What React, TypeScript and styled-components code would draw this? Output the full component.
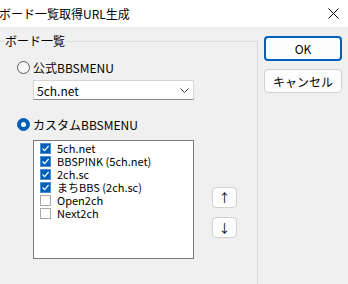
import styled, { createGlobalStyle } from "styled-components";

const Global = createGlobalStyle`
    html, body {
        margin: 0;
        padding: 0;
        background: #f0f0f0;
    }
    * {
        box-sizing: border-box;
    }
`;

const Window = styled.div`
    width: 348px;
    height: 284px;
    overflow: hidden;
    background: #f0f0f0;
    font-family: "Noto Sans CJK JP", "Noto Sans", sans-serif;
    font-size: 12px;
    color: #000;
    display: flex;
    flex-direction: column;
`;

const TitleBar = styled.div`
    height: 27px;
    flex: none;
    background: #fff;
    display: flex;
    align-items: center;
    justify-content: space-between;
    padding: 0 9px 0 0;
`;

const Title = styled.span`
    margin-left: -1px;
    font-size: 12px;
    line-height: 1;
`;

const Body = styled.div`
    display: flex;
    align-items: flex-start;
    padding-top: 9px;
    flex: 1;
`;

const GroupBox = styled.div`
    position: relative;
    margin: 5px 0 0 -10px;
    width: 268px;
    height: 260px;
    border-top: 1px solid #dcdcdc;
    border-right: 1px solid #dcdcdc;
    padding-left: 27px;
    display: flex;
    flex-direction: column;
`;

const Legend = styled.span`
    position: absolute;
    top: -9px;
    left: 14px;
    padding: 0 1px;
    background: #f0f0f0;
    line-height: 16px;
`;

const RadioRow = styled.label<{ $top: number }>`
    display: flex;
    align-items: center;
    gap: 3px;
    height: 16px;
    margin-top: ${(p) => p.$top}px;
`;

const Radio = styled.span<{ $on?: boolean }>`
    width: 13px;
    height: 13px;
    border-radius: 50%;
    flex: none;
    display: grid;
    place-items: center;
    background: ${(p) => (p.$on ? "#005fb8" : "#f7f7f7")};
    border: 1px solid ${(p) => (p.$on ? "#005fb8" : "#5c5c5c")};
    &::after {
        content: "";
        display: ${(p) => (p.$on ? "block" : "none")};
        width: 5px;
        height: 5px;
        border-radius: 50%;
        background: #fff;
    }
`;

const Combo = styled.div`
    margin: 5px 0 0 16px;
    width: 161px;
    height: 20px;
    background: #fff;
    border: 1px solid #d4d4d4;
    border-bottom-color: #8a8a8a;
    display: flex;
    align-items: center;
    justify-content: space-between;
    padding: 0 4px 0 3px;
`;

const ListRow = styled.div`
    display: flex;
    margin: 8px 0 0 16px;
`;

const ListBox = styled.div`
    width: 161px;
    height: 119px;
    background: #fff;
    border: 1px solid #7a7a7a;
    padding: 1px 0 0 6px;
    display: flex;
    flex-direction: column;
`;

const Item = styled.div`
    height: 13px;
    display: flex;
    align-items: center;
    gap: 6px;
    font-size: 11px;
    line-height: 13px;
`;

const Check = styled.span<{ $on?: boolean }>`
    width: 11px;
    height: 11px;
    flex: none;
    display: grid;
    place-items: center;
    background: ${(p) => (p.$on ? "#005fb8" : "#fdfdfd")};
    border: 1px solid ${(p) => (p.$on ? "#4c8fcf" : "#a8a8a8")};
`;

const ArrowCol = styled.div`
    margin: 47px 0 0 18px;
    display: flex;
    flex-direction: column;
    gap: 9px;
`;

const SmallBtn = styled.div`
    width: 25px;
    height: 21px;
    border: 1px solid #d0d0d0;
    border-radius: 4px;
    background: #fdfdfd;
    display: grid;
    place-items: center;
    font-size: 12px;
    line-height: 1;
`;

const ButtonCol = styled.div`
    margin-left: 6px;
    display: flex;
    flex-direction: column;
    gap: 8px;
`;

const Button = styled.div<{ $primary?: boolean }>`
    width: 78px;
    height: ${(p) => (p.$primary ? 25 : 24)}px;
    border-radius: 4px;
    background: #fdfdfd;
    border: ${(p) => (p.$primary ? "2px solid #005fb8" : "1px solid #d0d0d0")};
    display: grid;
    place-items: center;
    font-size: 12px;
`;

const items = [
    { label: "5ch.net", on: true },
    { label: "BBSPINK (5ch.net)", on: true },
    { label: "2ch.sc", on: true },
    { label: "まちBBS (2ch.sc)", on: true },
    { label: "Open2ch", on: false },
    { label: "Next2ch", on: false },
];

function App() {
    return (
        <Window>
            <Global />
            <TitleBar>
                <Title>ボード一覧取得URL生成</Title>
                <svg width="11" height="11" viewBox="0 0 11 11">
                    <path d="M0.5 0.5 L10.5 10.5 M10.5 0.5 L0.5 10.5" stroke="#000" strokeWidth="1" />
                </svg>
            </TitleBar>
            <Body>
                <GroupBox>
                    <Legend>ボード一覧</Legend>
                    <RadioRow $top={17}>
                        <Radio />
                        公式BBSMENU
                    </RadioRow>
                    <Combo>
                        <span>5ch.net</span>
                        <svg width="9" height="5" viewBox="0 0 9 5">
                            <path d="M0.5 0.5 L4.5 4.5 L8.5 0.5" fill="none" stroke="#333" strokeWidth="1" />
                        </svg>
                    </Combo>
                    <RadioRow $top={16}>
                        <Radio $on />
                        カスタムBBSMENU
                    </RadioRow>
                    <ListRow>
                        <ListBox>
                            {items.map((it) => (
                                <Item key={it.label}>
                                    <Check $on={it.on}>
                                        {it.on ? (
                                            <svg width="9" height="9" viewBox="0 0 9 9">
                                                <path d="M1.5 4.5 L3.6 6.6 L7.6 2" fill="none" stroke="#fff" strokeWidth="1.2" />
                                            </svg>
                                        ) : null}
                                    </Check>
                                    {it.label}
                                </Item>
                            ))}
                        </ListBox>
                        <ArrowCol>
                            <SmallBtn>↑</SmallBtn>
                            <SmallBtn>↓</SmallBtn>
                        </ArrowCol>
                    </ListRow>
                </GroupBox>
                <ButtonCol>
                    <Button $primary>OK</Button>
                    <Button>キャンセル</Button>
                </ButtonCol>
            </Body>
        </Window>
    );
}

export default App;
